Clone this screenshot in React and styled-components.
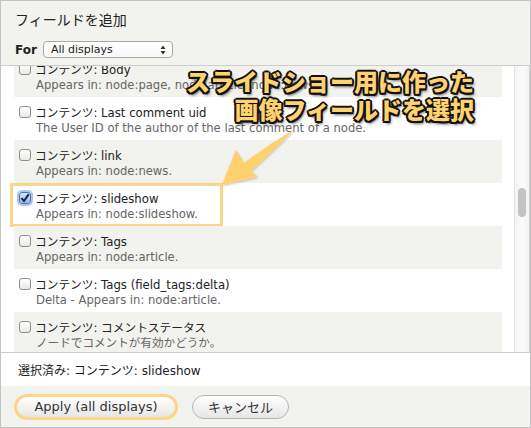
import React from "react";
import styled, { createGlobalStyle } from "styled-components";

const Global = createGlobalStyle`
  html, body { margin: 0; padding: 0; background: #fff; }
  body { font-family: "DejaVu Sans", "Noto Sans CJK JP", sans-serif; }
  * { box-sizing: border-box; }
`;

const JP = `"DejaVu Sans", "Noto Sans CJK JP", sans-serif`;

const Dialog = styled.div`
  position: relative;
  width: 531px;
  height: 428px;
  border: 1px solid #c4c4c4;
  display: flex;
  flex-direction: column;
  overflow: hidden;
  background: #fff;
  font-family: ${JP};
`;

const Header = styled.div`
  height: 65px;
  flex: none;
  background: #f2f2ee;
  border-bottom: 1px solid #cdcdcd;
  padding: 10px 0 0 14px;
  display: flex;
  flex-direction: column;
  gap: 12px;
`;

const Title = styled.div`
  font-size: 14px;
  line-height: 18px;
  color: #222;
`;

const ForRow = styled.div`
  display: flex;
  align-items: center;
  gap: 6px;
`;

const ForLabel = styled.span`
  font-size: 12px;
  font-weight: bold;
  color: #222;
`;

const Select = styled.div`
  width: 130px;
  height: 17px;
  border: 1px solid #a9a9a9;
  border-radius: 4px;
  background: linear-gradient(#fff, #f7f7f7);
  display: flex;
  align-items: center;
  justify-content: space-between;
  padding: 0 6px 0 7px;
  font-size: 11px;
  color: #222;
`;

const Body = styled.div`
  flex: 1;
  display: flex;
  overflow: hidden;
`;

const ListClip = styled.div`
  flex: 1;
  overflow: hidden;
  padding-left: 13px;
  padding-right: 12px;
`;

const ListInner = styled.div`
  margin-top: -12px;
`;

const Row = styled.div`
  position: relative;
  height: 43px;
  padding: 6px 0 0 0;
  background: ${(p) => (p.$striped ? "#f2f2ee" : "#fff")};
`;

const LabelLine = styled.div`
  display: flex;
  align-items: center;
  height: 17px;
  padding-left: 5px;
  gap: 4px;
  font-size: 11.7px;
  color: #222;
  white-space: nowrap;
`;

const Box = styled.span`
  width: 12px;
  height: 12px;
  flex: none;
  border: 1px solid #8e8e8e;
  border-radius: 3px;
  background: linear-gradient(#fff, #e9e9e9);
  display: flex;
  align-items: center;
  justify-content: center;
  ${(p) =>
    p.$checked
      ? `border-color:#4a73b5; background: linear-gradient(#d5e4f8,#9ab9e6); box-shadow: 0 0 0 2px rgba(110,150,220,0.55);`
      : ""}
`;

const Desc = styled.div`
  height: 17px;
  line-height: 17px;
  padding-left: 22px;
  font-size: 11.6px;
  color: #666;
  white-space: nowrap;
`;

const Highlight = styled.div`
  position: absolute;
  left: -4px;
  top: 0;
  width: 213px;
  height: 44px;
  border: 3px solid #fdd586;
  pointer-events: none;
`;

const Track = styled.div`
  width: 16px;
  flex: none;
  border-left: 1px solid #e2e2e2;
  border-right: 1px solid #d2d2d2;
  background: linear-gradient(90deg, #f3f3f3, #fbfbfb 50%, #f3f3f3);
  position: relative;
`;

const Thumb = styled.div`
  position: absolute;
  left: 3px;
  top: 122px;
  width: 8px;
  height: 29px;
  border-radius: 4px;
  background: #c3c3c3;
`;

const Selected = styled.div`
  height: 34px;
  flex: none;
  border-top: 1px solid #cdcdcd;
  display: flex;
  align-items: center;
  padding-left: 17px;
  font-size: 12px;
  color: #222;
`;

const ButtonBar = styled.div`
  height: 41px;
  flex: none;
  background: #f2f2ee;
  display: flex;
  align-items: center;
  padding-left: 13px;
  gap: 14px;
`;

const Button = styled.button`
  height: ${(p) => (p.$focus ? "26px" : "24px")};
  padding: 0;
  border-radius: 13px;
  border: ${(p) => (p.$focus ? "3px solid #fdd586" : "1px solid #b5b5b5")};
  background: linear-gradient(#ffffff, #e6e6e6);
  font-family: ${JP};
  font-size: 13px;
  color: #333;
  white-space: nowrap;
  display: flex;
  align-items: center;
  justify-content: center;
  width: ${(p) => p.$w}px;
`;

const Annotation = styled.div`
  position: absolute;
  top: 66px;
  right: 56px;
  text-align: right;
  font-family: "Noto Sans CJK JP", sans-serif;
  font-weight: 900;
  font-size: 24px;
  line-height: 28px;
  color: #fed36f;
  white-space: nowrap;
  text-shadow:
    -2px 0 0 #111, 2px 0 0 #111, 0 -2px 0 #111, 0 2px 0 #111,
    -1.5px -1.5px 0 #111, 1.5px -1.5px 0 #111, -1.5px 1.5px 0 #111, 1.5px 1.5px 0 #111,
    2px 3px 3px rgba(0,0,0,0.6);
  pointer-events: none;
`;

const ArrowSvg = styled.svg`
  position: absolute;
  left: 0;
  top: 0;
  pointer-events: none;
`;

const rows = [
  { label: "コンテンツ: Body", desc: "Appears in: node:page, node:article, node:news." },
  { label: "コンテンツ: Last comment uid", desc: "The User ID of the author of the last comment of a node." },
  { label: "コンテンツ: link", desc: "Appears in: node:news." },
  { label: "コンテンツ: slideshow", desc: "Appears in: node:slideshow.", checked: true },
  { label: "コンテンツ: Tags", desc: "Appears in: node:article." },
  { label: "コンテンツ: Tags (field_tags:delta)", desc: "Delta - Appears in: node:article." },
  { label: "コンテンツ: コメントステータス", desc: "ノードでコメントが有効かどうか。" },
];

export default function App() {
  return (
    <>
      <Global />
      <Dialog>
        <Header>
          <Title>フィールドを追加</Title>
          <ForRow>
            <ForLabel>For</ForLabel>
            <Select>
              <span>All displays</span>
              <svg width="6" height="10" viewBox="0 0 6 10">
                <path d="M3 0.5 L5.5 4 H0.5 Z M3 9.5 L5.5 6 H0.5 Z" fill="#333" />
              </svg>
            </Select>
          </ForRow>
        </Header>
        <Body>
          <ListClip>
            <ListInner>
              {rows.map((r, i) => (
                <Row key={i} $striped={i % 2 === 0}>
                  <LabelLine>
                    <Box $checked={r.checked}>
                      {r.checked && (
                        <svg width="10" height="10" viewBox="0 0 10 10">
                          <path d="M1.5 5.2 L4 8 L8.8 1.2" stroke="#10234a" strokeWidth="2" fill="none" />
                        </svg>
                      )}
                    </Box>
                    <span>{r.label}</span>
                  </LabelLine>
                  <Desc>{r.desc}</Desc>
                  {r.checked && <Highlight />}
                </Row>
              ))}
            </ListInner>
          </ListClip>
          <Track>
            <Thumb />
          </Track>
        </Body>
        <Selected>選択済み: コンテンツ: slideshow</Selected>
        <ButtonBar>
          <Button $focus $w={164}>Apply (all displays)</Button>
          <Button $w={97}>キャンセル</Button>
        </ButtonBar>
        <Annotation>
          スライドショー用に作った
          <br />
          画像フィールドを選択
        </Annotation>
        <ArrowSvg width="531" height="428" viewBox="0 0 531 428">
          <defs>
            <filter id="sh" x="-20%" y="-20%" width="140%" height="140%">
              <feDropShadow dx="0.5" dy="1" stdDeviation="0.8" floodColor="#000" floodOpacity="0.25" />
            </filter>
          </defs>
          <path
            d="M221 184 L235 149 L243 162 Q268 143 294 128 Q272 150 250 170 L257 176 Z"
            fill="#fed06e"
            filter="url(#sh)"
          />
        </ArrowSvg>
      </Dialog>
    </>
  );
}
